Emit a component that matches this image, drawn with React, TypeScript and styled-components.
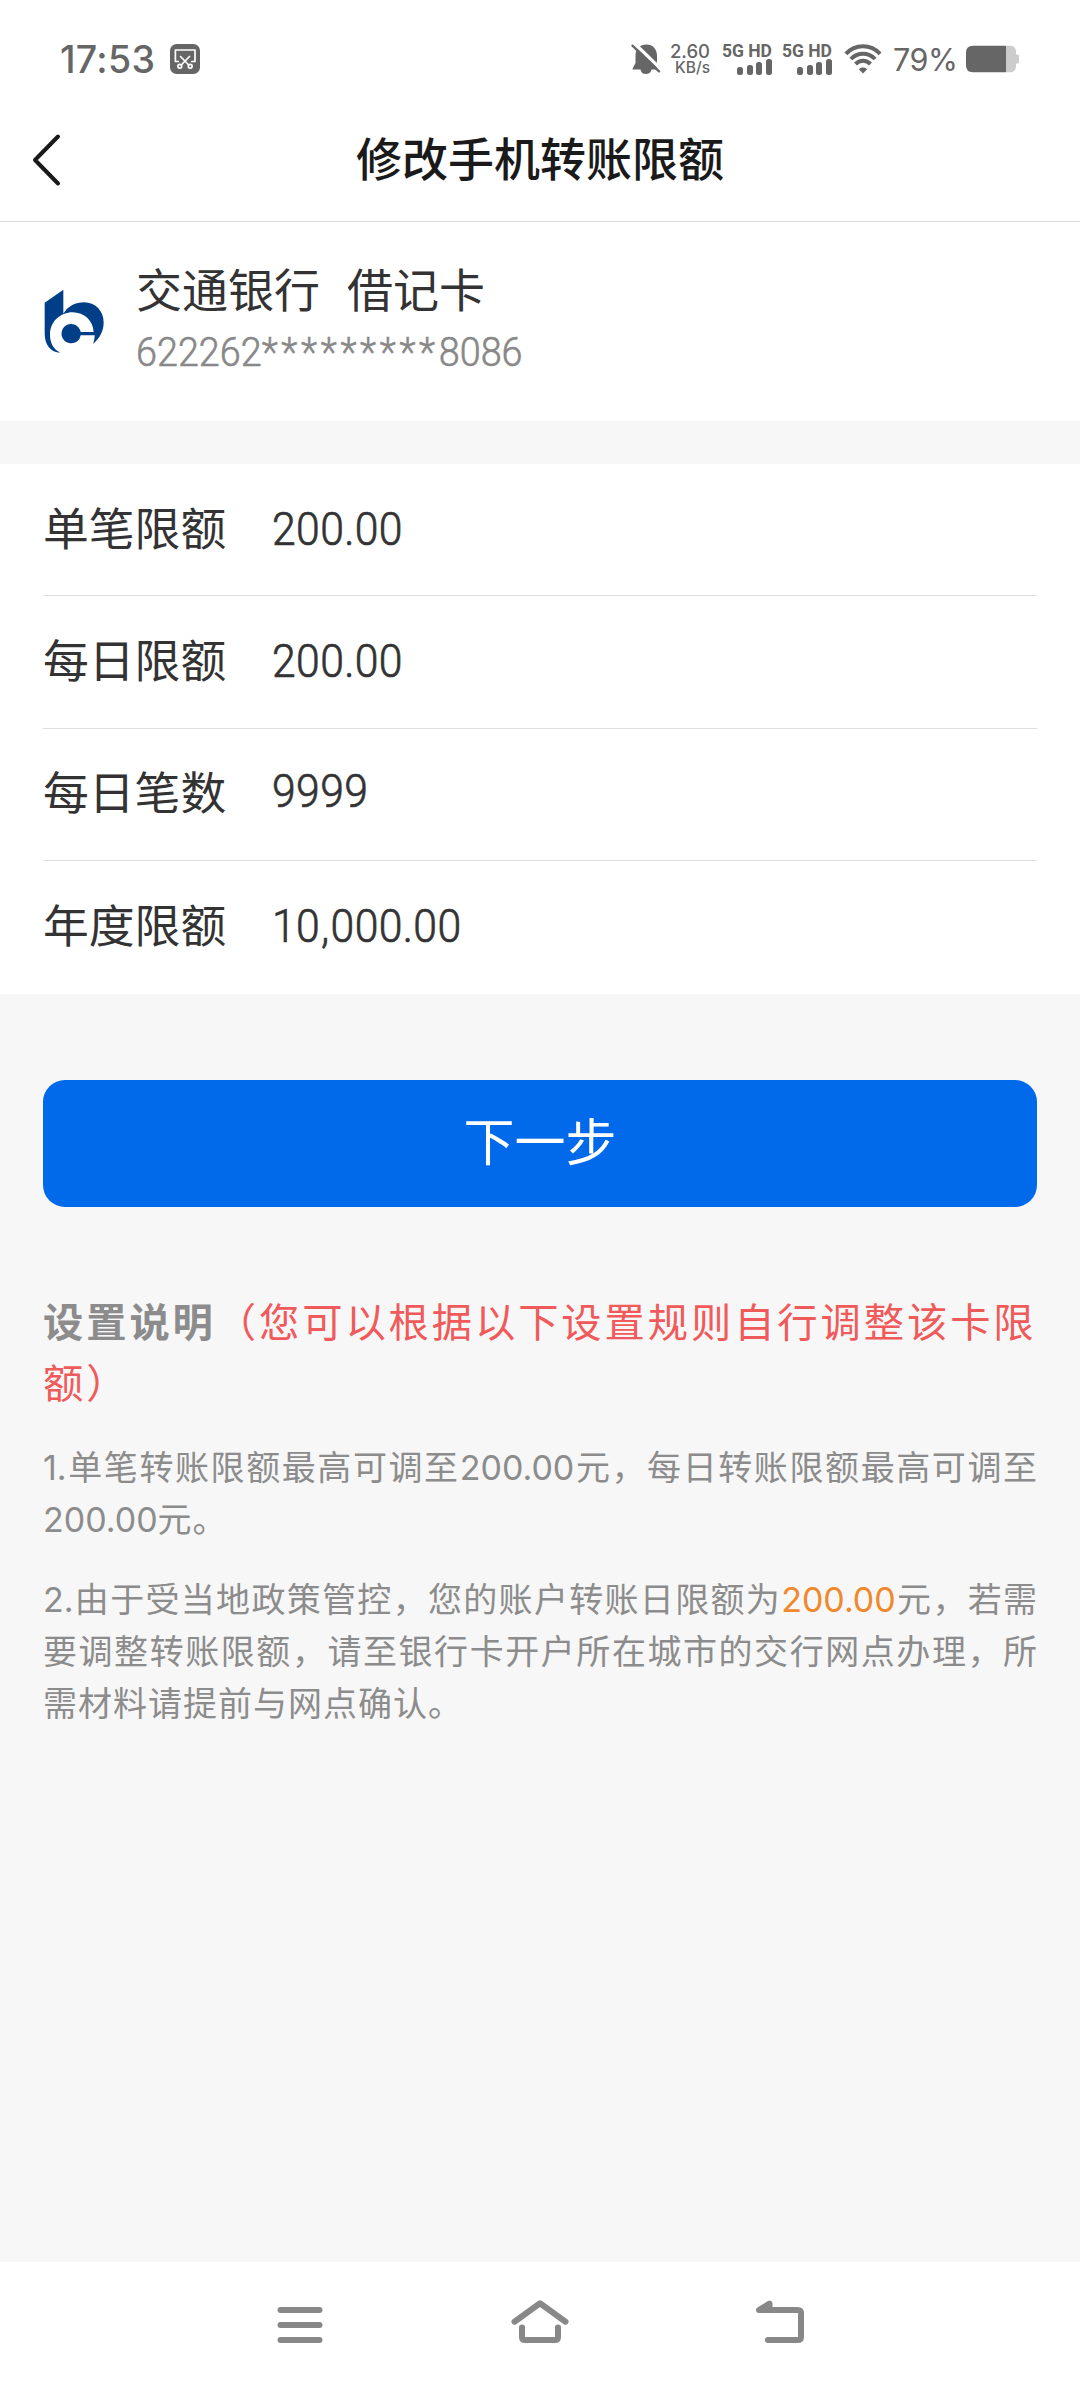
import React from "react";
import styled, { createGlobalStyle } from "styled-components";

const CJK = `"Noto Sans CJK SC", "Noto Sans", sans-serif`;
const LATIN = `Inter, "Noto Sans CJK SC", sans-serif`;
const NARROW = `Roboto, "Noto Sans CJK SC", sans-serif`;

const GlobalStyle = createGlobalStyle`
  *, *::before, *::after { box-sizing: border-box; }
  body { margin: 0; background: #f7f7f7; font-family: ${CJK}; }
  svg { display: block; flex: none; }
  h1, h2, p, ul { margin: 0; padding: 0; }
`;

const Screen = styled.div`
  display: flex;
  flex-direction: column;
  width: 1080px;
  height: 2388px;
  overflow: hidden;
  background: #f7f7f7;
`;

const StatusBar = styled.header`
  display: flex;
  align-items: center;
  justify-content: space-between;
  flex: none;
  height: 118px;
  padding: 0 60px;
  background: #fff;
  color: #666;
  font-family: ${LATIN};
`;

const StatusGroup = styled.div`
  display: flex;
  align-items: center;
`;

const Clock = styled.span`
  width: 110px;
  padding-top: 1px;
  font-size: 37.5px;
  font-weight: 500;
  line-height: 44px;
  letter-spacing: 0.3px;
  white-space: nowrap;
`;

const Speed = styled.div`
  display: flex;
  flex-direction: column;
  align-items: flex-end;
  width: 40px;
  margin: 0 14px 0 9px;
  font-weight: 500;
  white-space: nowrap;
`;

const SpeedLine = styled.span<{ $size: number; $height: number }>`
  font-size: ${(p) => p.$size}px;
  line-height: ${(p) => p.$height}px;
`;

const Cell = styled.div`
  display: flex;
  flex-direction: column;
  align-items: flex-end;
  width: 48px;
  margin-right: 12px;
`;

const CellLabel = styled.span`
  font: 700 17.5px/16px ${NARROW};
  white-space: nowrap;
`;

const Bars = styled.div`
  display: flex;
  align-items: flex-end;
  gap: 3.6px;
  height: 16px;
`;

const Bar = styled.i<{ $h: number }>`
  width: 6px;
  height: ${(p) => p.$h}px;
  border-radius: 2.5px;
  background: #666;
`;

const Percent = styled.span`
  width: 84px;
  padding: 2px 0 0 11px;
  font-size: 30.5px;
  line-height: 36px;
  letter-spacing: -0.4px;
  white-space: nowrap;
`;

const TitleBar = styled.div`
  display: grid;
  grid-template-columns: 120px 1fr 120px;
  align-items: center;
  flex: none;
  height: 104px;
  padding-bottom: 21px;
  border-bottom: 1px solid #dcdcdc;
  background: #fff;
`;

const BackButton = styled.button`
  display: flex;
  padding: 2px 0 0 30px;
  border: 0;
  background: none;
`;

const Title = styled.h1`
  padding-bottom: 6px;
  color: #1a1a1a;
  text-align: center;
  font-size: 46px;
  font-weight: 500;
  line-height: 72px;
`;

const AccountCard = styled.section`
  display: flex;
  align-items: flex-start;
  flex: none;
  height: 199px;
  padding: 35px 43px 0 30px;
  background: #fff;
`;

const LogoBox = styled.div`
  flex: none;
  padding-top: 13px;
`;

const AccountText = styled.div`
  padding-left: 16px;
`;

const BankName = styled.p`
  display: flex;
  gap: 27px;
  color: #333;
  font-size: 46px;
  line-height: 60px;
`;

const CardNumber = styled.p`
  padding-top: 5px;
  color: #888;
  font: 300 40.3px/62px ${NARROW};
  -webkit-text-stroke: 0.6px #888;
  white-space: nowrap;
  transform: scaleX(0.937);
  transform-origin: left;
`;

const Mask = styled.span`
  letter-spacing: 3.9px;
`;

const Limits = styled.ul`
  flex: none;
  height: 530px;
  margin-top: 43px;
  padding: 0 43px;
  list-style: none;
  background: #fff;
`;

const LimitRow = styled.li`
  display: flex;
  align-items: center;
  height: 132.4px;
  padding-bottom: 8px;
  border-bottom: 1px solid #dedede;
  color: #333;
  &:last-child { border-bottom: 0; }
`;

const LimitLabel = styled.span`
  width: 229px;
  font-size: 45.8px;
  line-height: 66px;
`;

const LimitValue = styled.span<{ $drop?: number }>`
  padding-top: ${(p) => p.$drop ?? 6}px;
  font: 300 46.2px/60px ${NARROW};
  -webkit-text-stroke: 0.7px #333;
  letter-spacing: 0.4px;
  transform: scaleX(0.925);
  transform-origin: left;
`;

const Comma = styled.span`
  padding: 0 1px;
`;

const NextButton = styled.button`
  flex: none;
  height: 127px;
  margin: 86px 43px 0;
  padding: 0 0 9px;
  border: 0;
  border-radius: 22px;
  background: #006aea;
  color: #fff;
  font: 400 51px/76px ${CJK};
`;

const Notes = styled.section`
  flex: 1;
  padding: 83px 43px 0;
  color: #8c8c8c;
`;

const NotesTitle = styled.h2`
  margin-bottom: 29px;
  color: #f05a5a;
  font-size: 40.3px;
  font-weight: 400;
  line-height: 60.6px;
  letter-spacing: 2.9px;
`;

const Strong = styled.b`
  color: #8c8c8c;
  font-weight: 700;
`;

const Paragraph = styled.p`
  margin-bottom: 27px;
  font-size: 34px;
  line-height: 52.2px;
`;

const Line = styled.span<{ $full?: boolean }>`
  display: block;
  height: 52.2px;
  white-space: nowrap;
  text-align: justify;
  text-align-last: ${(p) => (p.$full ? "justify" : "left")};
  letter-spacing: ${(p) => (p.$full ? 0 : 1)}px;
`;

const Num = styled.span<{ $accent?: boolean }>`
  color: ${(p) => (p.$accent ? "#f0882d" : "inherit")};
  font-family: ${LATIN};
  line-height: 1;
  letter-spacing: 0;
`;

const NavBar = styled.nav`
  display: grid;
  grid-template-columns: repeat(3, 240px);
  place-content: center;
  place-items: center;
  flex: none;
  height: 126px;
  background: #fff;
`;

const ClipIcon = () => (
  <svg width="30" height="30" viewBox="0 0 30 30" fill="none">
    <rect width="30" height="30" rx="6.5" fill="#666" />
    <g stroke="#fff" strokeWidth="1.7" strokeLinecap="round" strokeLinejoin="round">
      <path d="M8.3 17.5H5.4V6H25V17.5H21.7" />
      <path d="M10.5 12.5L18.8 21M19.5 12.5L11.2 21" />
      <circle cx="9.8" cy="22.3" r="1.9" />
      <circle cx="20.2" cy="22.3" r="1.9" />
    </g>
  </svg>
);

const MuteIcon = () => (
  <svg width="30" height="32" viewBox="0 0 30 32">
    <path
      fill="#666"
      d="M15.5 1.5C9 1.5 4.5 6 4.5 12.5V20L1.7 25.3V26.5H9.5C10 29.5 12 31 14.8 31S20 29.5 20.5 26.5H26V12.5C26 6 21.5 1.5 15.5 1.5Z"
    />
    <path d="M3 0L30 26" stroke="#fff" strokeWidth="3.4" />
    <path d="M1.5 2.6L28 28.4" stroke="#666" strokeWidth="2.3" strokeLinecap="round" />
  </svg>
);

const WifiIcon = () => (
  <svg width="38" height="32" viewBox="0 0 38 32" fill="none">
    <g stroke="#666" strokeWidth="4">
      <path d="M1.9 10.8C11.3 .7 26.7 .7 36.1 10.8" />
      <path d="M6.9 16C13.6 8.9 24.4 8.9 31.1 16" />
      <path d="M11.5 21C15.7 16.7 22.3 16.7 26.5 21" />
    </g>
    <path d="M14.8 26.3C17 23.9 21 23.9 23.2 26.3L19 30.5Z" fill="#666" />
  </svg>
);

const BatteryIcon = () => (
  <svg width="54" height="28" viewBox="0 0 54 28">
    <path d="M40 .7H44C48 .7 50 3 50 7V9.5H51.5Q53 9.5 53 11V17Q53 18.5 51.5 18.5H50V20.5C50 25 48 27.3 44 27.3H40Z" fill="#ccc" />
    <path d="M40 .7H7Q0 .7 0 7.7V20.3Q0 27.3 7 27.3H40Z" fill="#666" />
  </svg>
);

const SignalCell = () => (
  <Cell>
    <CellLabel>5G HD</CellLabel>
    <Bars>
      {[8, 10, 13, 16].map((h) => (
        <Bar key={h} $h={h} />
      ))}
    </Bars>
  </Cell>
);

const BankLogo = () => (
  <svg width="90" height="100" viewBox="0 0 270 300">
    <path
      fill="#003f87"
      d="M44 98L100 59V131C114 108 137 97 162 97C196 97 221 122 221 158C221 184 207 207 189 222C192 214 194 206 194 196H152A29 29 0 1 1 152 186H191C189 152 163 127 128 127C91 127 60 155 60 194C60 219 71 238 91 248C62 248 44 225 44 190Z"
    />
  </svg>
);

const limits = [
  { label: "单笔限额", value: "200.00" },
  { label: "每日限额", value: "200.00" },
  { label: "每日笔数", value: "9999", drop: 1 },
  { label: "年度限额", value: "10,000.00" },
];

const Amount = ({ value }: { value: string }) => (
  <>
    {value.split(",").map((part, i) => (
      <React.Fragment key={i}>
        {i > 0 && <Comma>,</Comma>}
        {part}
      </React.Fragment>
    ))}
  </>
);

export default function App() {
  return (
    <Screen>
      <GlobalStyle />
      <StatusBar>
        <StatusGroup>
          <Clock>17:53</Clock>
          <ClipIcon />
        </StatusGroup>
        <StatusGroup>
          <MuteIcon />
          <Speed>
            <SpeedLine $size={18.5} $height={17}>2.60</SpeedLine>
            <SpeedLine $size={15.5} $height={16}>KB/s</SpeedLine>
          </Speed>
          <SignalCell />
          <SignalCell />
          <WifiIcon />
          <Percent>79%</Percent>
          <BatteryIcon />
        </StatusGroup>
      </StatusBar>

      <TitleBar>
        <BackButton aria-label="返回">
          <svg width="34" height="54" viewBox="0 0 34 54" fill="none">
            <path d="M28 3.5L5 27L28 50.5" stroke="#1a1a1a" strokeWidth="4" strokeLinecap="round" strokeLinejoin="round" />
          </svg>
        </BackButton>
        <Title>修改手机转账限额</Title>
      </TitleBar>

      <AccountCard>
        <LogoBox>
          <BankLogo />
        </LogoBox>
        <AccountText>
          <BankName>
            <span>交通银行</span>
            <span>借记卡</span>
          </BankName>
          <CardNumber>
            622262<Mask>*********</Mask>8086
          </CardNumber>
        </AccountText>
      </AccountCard>

      <Limits>
        {limits.map((row) => (
          <LimitRow key={row.label}>
            <LimitLabel>{row.label}</LimitLabel>
            <LimitValue $drop={row.drop}>
              <Amount value={row.value} />
            </LimitValue>
          </LimitRow>
        ))}
      </Limits>

      <NextButton>下一步</NextButton>

      <Notes>
        <NotesTitle>
          <Strong>设置说明</Strong>（您可以根据以下设置规则自行调整该卡限
          <br />
          额）
        </NotesTitle>
        <Paragraph>
          <Line $full>
            <Num>1.</Num>单笔转账限额最高可调至<Num>200.00</Num>元，每日转账限额最高可调至
          </Line>
          <Line>
            <Num>200.00</Num>元。
          </Line>
        </Paragraph>
        <Paragraph>
          <Line $full>
            <Num>2.</Num>由于受当地政策管控，您的账户转账日限额为<Num $accent>200.00</Num>元，若需
          </Line>
          <Line $full>要调整转账限额，请至银行卡开户所在城市的交行网点办理，所</Line>
          <Line>需材料请提前与网点确认。</Line>
        </Paragraph>
      </Notes>

      <NavBar>
        <svg width="60" height="60" viewBox="0 0 60 60" fill="none" stroke="#888" strokeWidth="6" strokeLinecap="round">
          <path d="M10.5 15H49.5M10.5 30H49.5M10.5 45H49.5" />
        </svg>
        <svg width="60" height="60" viewBox="0 0 60 60" fill="none" stroke="#888" strokeWidth="6" strokeLinecap="round" strokeLinejoin="round">
          <path d="M4.5 26.7L30 8.2L55.5 26.7" />
          <path d="M12 32.5V42Q12 45 15 45H45Q48 45 48 42V32.5" />
        </svg>
        <svg width="60" height="60" viewBox="0 0 60 60" fill="none" stroke="#888" strokeWidth="6" strokeLinecap="round" strokeLinejoin="round">
          <path d="M18 45H47.5Q51 45 51 42V18Q51 15 47.5 15H9L19.5 8.6V15" />
        </svg>
      </NavBar>
    </Screen>
  );
}
